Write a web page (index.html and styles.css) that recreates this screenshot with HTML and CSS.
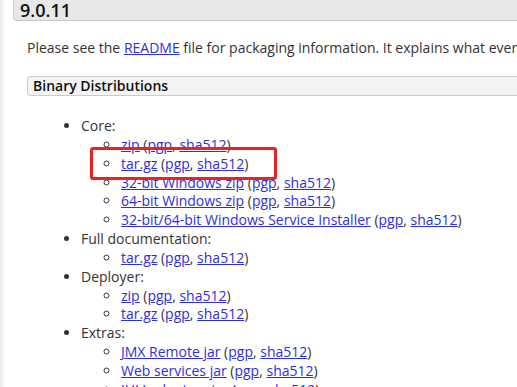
FILE: index.html
```html
<!DOCTYPE html>
<html lang="en">
<head>
    <meta charset="UTF-8">
    <title>Apache Tomcat 9 Downloads</title>
    <link rel="stylesheet" href="styles.css">
</head>
<body>
    <div class="page">
        <div class="section">
            <h3 class="version">9.0.11</h3>
            <div class="section-body">
                <p>Please see the <a href="#">README</a> file for packaging information. It explains what every distribution contains.</p>
                <div class="subsection">
                    <h4>Binary Distributions</h4>
                    <ul class="dist">
                        <li>Core:
                            <ul>
                                <li><a href="#">zip</a> (<a href="#">pgp</a>, <a href="#">sha512</a>)</li>
                                <li><a href="#">tar.gz</a> (<a href="#">pgp</a>, <a href="#">sha512</a>)</li>
                                <li><a href="#">32-bit Windows zip</a> (<a href="#">pgp</a>, <a href="#">sha512</a>)</li>
                                <li><a href="#">64-bit Windows zip</a> (<a href="#">pgp</a>, <a href="#">sha512</a>)</li>
                                <li><a href="#">32-bit/64-bit Windows Service Installer</a> (<a href="#">pgp</a>, <a href="#">sha512</a>)</li>
                            </ul>
                        </li>
                        <li>Full documentation:
                            <ul>
                                <li><a href="#">tar.gz</a> (<a href="#">pgp</a>, <a href="#">sha512</a>)</li>
                            </ul>
                        </li>
                        <li>Deployer:
                            <ul>
                                <li><a href="#">zip</a> (<a href="#">pgp</a>, <a href="#">sha512</a>)</li>
                                <li><a href="#">tar.gz</a> (<a href="#">pgp</a>, <a href="#">sha512</a>)</li>
                            </ul>
                        </li>
                        <li>Extras:
                            <ul>
                                <li><a href="#">JMX Remote jar</a> (<a href="#">pgp</a>, <a href="#">sha512</a>)</li>
                                <li><a href="#">Web services jar</a> (<a href="#">pgp</a>, <a href="#">sha512</a>)</li>
                                <li><a href="#">JULI adapters jar</a> (<a href="#">pgp</a>, <a href="#">sha512</a>)</li>
                                <li><a href="#">JULI log4j jar</a> (<a href="#">pgp</a>, <a href="#">sha512</a>)</li>
                            </ul>
                        </li>
                    </ul>
                </div>
            </div>
        </div>
        <div class="mark"></div>
    </div>
</body>
</html>
```

FILE: styles.css
```css
body {
    margin: 0;
    overflow: hidden;
    font-family: 'Open Sans', 'Noto Sans', sans-serif;
    font-size: 14px;
    color: #333;
    background: #fff;
}
.page {
    position: relative;
    width: 900px;
    min-height: 387px;
    background: linear-gradient(to right, #e9e9e9 0, #fafafa 4px, #fff 7px);
}
.section {
    margin-left: 13px;
}
.version {
    margin: 0;
    height: 20px;
    line-height: 20px;
    padding: 0 6px;
    font-size: 18px;
    font-weight: 600;
    color: #111;
    background: #e8e8e8;
    border-left: 1px solid #cfcfcf;
    border-bottom: 1px solid #c6c6c6;
    border-bottom-left-radius: 4px;
}
.section-body {
    padding-left: 14px;
}
.section-body p {
    margin: 17px 0 0;
    line-height: 19px;
}
.section-body a {
    color: #2e2ee0;
}
.subsection h4 {
    margin: 19px 0 0;
    height: 18px;
    line-height: 18px;
    padding: 0 5px;
    font-size: 14px;
    font-weight: 600;
    color: #111;
    background: #f4f4f4;
    border: 1px solid #cbcbcb;
    border-right: none;
    border-radius: 4px 0 0 4px;
}
.dist {
    margin: 21px 0 0;
    padding-left: 54px;
    line-height: 18.85px;
}
.dist ul {
    margin: 0;
    padding-left: 40px;
    list-style-type: circle;
}
.mark {
    position: absolute;
    left: 90px;
    top: 147px;
    width: 181px;
    height: 27px;
    border: 3px solid #f0201c;
    border-radius: 3px;
}
```
